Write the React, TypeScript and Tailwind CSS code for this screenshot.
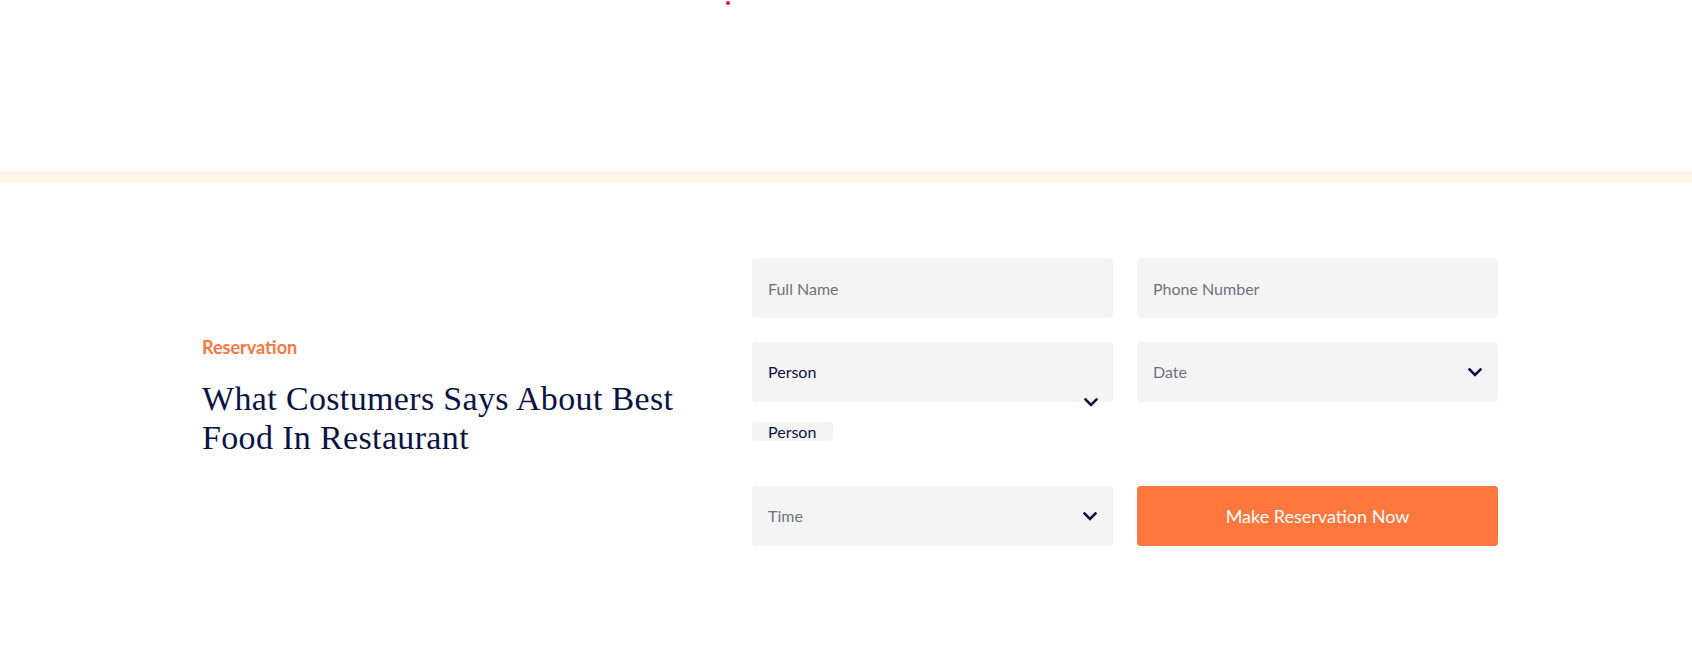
import { ChangeEvent, useState } from 'react';

function Chevron({ className = '' }: { className?: string }) {
  return (
    <svg
      width="14"
      height="9"
      viewBox="0 0 14 9"
      fill="none"
      stroke="#0b1346"
      strokeWidth="2.6"
      strokeLinecap="square"
      className={className}
    >
      <polyline points="1.5,1.5 7,7 12.5,1.5" />
    </svg>
  );
}

const field =
  'block w-full h-[60px] px-4 bg-[#f4f4f4] rounded-[4px] text-[16px] outline-none placeholder:text-[#6c7380] text-[#0b1346]';

export default function App() {
  const [name, setName] = useState('');
  const [phone, setPhone] = useState('');

  return (
    <div className="min-h-[651px] bg-white font-['Lato','Liberation_Sans',sans-serif]">
      <div className="h-[171px] pt-[1px]">
        <div className="ml-[726px] w-[4px] h-[4px] rounded-full bg-[#e8142a]" />
      </div>
      <div className="h-[12px] bg-[#fff6e9]" />

      <section className="flex pl-[202px] pt-[75px] pb-[105px]">
        <div className="w-[550px] pt-[78px]">
          <p className="text-[18px] leading-[22px] font-bold text-[#ff773d]">Reservation</p>
          <h2 className="mt-[21px] font-['Liberation_Serif',serif] text-[34px] leading-[39px] text-[#0b1346] tracking-[0.35px]">
            What Costumers Says About Best
            <br />
            Food In Restaurant
          </h2>
        </div>

        <form className="grid grid-cols-2 gap-x-[24px] w-[746px]" onSubmit={(e) => e.preventDefault()}>
          <input
            className={field}
            placeholder="Full Name"
            value={name}
            onChange={(e: ChangeEvent<HTMLInputElement>) => setName(e.target.value)}
          />
          <input
            className={field}
            placeholder="Phone Number"
            value={phone}
            onChange={(e: ChangeEvent<HTMLInputElement>) => setPhone(e.target.value)}
          />

          <div className="mt-[24px]">
            <div className="relative">
              <div className={`${field} flex items-center`}>Person</div>
              <Chevron className="absolute right-[15px] top-[56px]" />
            </div>
            <div className="mt-[20px] w-[81px] h-[19px] rounded-[3px] bg-[#f4f4f4] pl-4 text-[16px] leading-[19px] text-[#0b1346]">
              Person
            </div>
          </div>
          <div className="mt-[24px]">
            <div className={`${field} flex items-center justify-between text-[#6c7380]`}>
              <span>Date</span>
              <Chevron />
            </div>
          </div>

          <div className="mt-[45px]">
            <div className={`${field} flex items-center justify-between text-[#6c7380]`}>
              <span>Time</span>
              <Chevron />
            </div>
          </div>
          <div className="mt-[45px]">
            <button
              type="submit"
              className="w-full h-[60px] rounded-[4px] bg-[#ff773d] text-white text-[18px]"
            >
              Make Reservation Now
            </button>
          </div>
        </form>
      </section>
    </div>
  );
}
